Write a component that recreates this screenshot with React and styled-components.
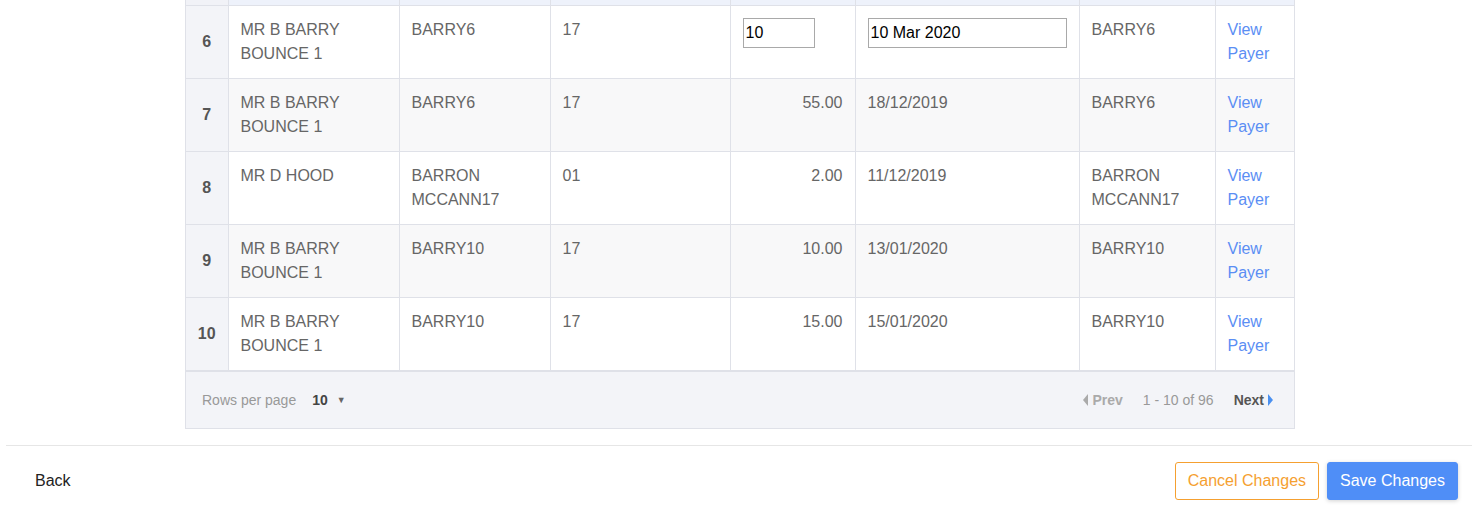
import React from 'react'
import styled, { createGlobalStyle } from 'styled-components'

const GlobalStyle = createGlobalStyle`
body {
  margin: 0;
  background: #fff;
  font-family: "Liberation Sans", Arial, sans-serif;
}
`

const Page = styled.div`
width: 1473px;
height: 525px;
overflow: hidden;
`

const TableWrap = styled.div`
box-sizing: border-box;
margin-left: 185px;
width: 1110px;
border: 1px solid #dfe1e8;
border-top: none;
`

const Table = styled.table`
width: 100%;
border-collapse: collapse;
table-layout: fixed;
font-size: 16px;
line-height: 24px;
color: #666;
`

const HeadTail = styled.tr`
height: 5px;
td {
  padding: 0;
  background: #eef2fb;
  border-left: 1px solid #dfe1e8;
  border-bottom: 1px solid #dfe1e8;
}
td:first-child {
  background: #f1f2f7;
  border-left: none;
}
`

const Row = styled.tr`
background: ${p => (p.striped ? '#f8f8f9' : '#fff')};
`

const Cell = styled.td`
height: 48px;
padding: 12px 12px;
vertical-align: top;
text-align: ${p => (p.right ? 'right' : 'left')};
border-left: 1px solid #dfe1e8;
border-bottom: 1px solid #dfe1e8;
`

const NumCell = styled.td`
padding: 0;
text-align: center;
vertical-align: middle;
font-weight: bold;
color: #555;
background: #f3f4f8;
border-bottom: 1px solid #dfe1e8;
`

const LinkText = styled.a`
color: #5b8ef4;
text-decoration: none;
cursor: pointer;
`

const Input = styled.input`
box-sizing: border-box;
display: block;
width: ${p => p.w}px;
height: 30px;
margin: 0;
padding: 1px 2px;
border: 1px solid #a9a9a9;
font-family: "Liberation Sans", Arial, sans-serif;
font-size: 16px;
color: #000;
background: #fff;
`

const Pager = styled.div`
display: flex;
align-items: center;
justify-content: space-between;
height: 56px;
padding: 0 21px 0 16px;
background: #f3f4f8;
border-top: 1px solid #dfe1e8;
font-size: 14px;
color: #999;
`

const PagerSide = styled.div`
display: flex;
align-items: center;
gap: ${p => p.gap}px;
`

const RowsSelect = styled.span`
display: inline-flex;
align-items: center;
gap: 9px;
font-weight: bold;
color: #444;
`

const Caret = styled.span`
font-size: 9px;
color: #666;
`

const PageBtn = styled.span`
display: inline-flex;
align-items: center;
gap: 4px;
font-weight: bold;
color: ${p => (p.active ? '#555' : '#aaa')};
`

const Tri = styled.span`
width: 0;
height: 0;
border-top: 6px solid transparent;
border-bottom: 6px solid transparent;
${p => (p.left ? 'border-right: 5px solid #aaa;' : 'border-left: 5px solid #4a90f0;')}
`

const Divider = styled.div`
margin: 16px 0 0 6px;
width: 1466px;
border-top: 1px solid #e6e6e6;
`

const Footer = styled.div`
display: flex;
align-items: center;
justify-content: space-between;
padding: 16px 15px 0 35px;
`

const BackLink = styled.a`
font-size: 16px;
color: #222;
cursor: pointer;
`

const Actions = styled.div`
display: flex;
gap: 8px;
`

const Button = styled.button`
box-sizing: border-box;
height: 38px;
padding: 0 12px;
border-radius: 3px;
font-family: "Liberation Sans", Arial, sans-serif;
font-size: 16px;
cursor: pointer;
${p => p.primary
    ? 'background: #4f8ef7; color: #fff; border: 1px solid #4f8ef7; box-shadow: 0 1px 4px rgba(0,0,0,0.18);'
    : 'background: #fff; color: #f5a030; border: 1px solid #f5a030;'}
`

const rows = [
  { n: 6, name: 'MR B BARRY BOUNCE 1', ref: 'BARRY6', code: '17', edit: true, ref2: 'BARRY6' },
  { n: 7, name: 'MR B BARRY BOUNCE 1', ref: 'BARRY6', code: '17', amount: '55.00', date: '18/12/2019', ref2: 'BARRY6' },
  { n: 8, name: 'MR D HOOD', ref: 'BARRON MCCANN17', code: '01', amount: '2.00', date: '11/12/2019', ref2: 'BARRON MCCANN17' },
  { n: 9, name: 'MR B BARRY BOUNCE 1', ref: 'BARRY10', code: '17', amount: '10.00', date: '13/01/2020', ref2: 'BARRY10' },
  { n: 10, name: 'MR B BARRY BOUNCE 1', ref: 'BARRY10', code: '17', amount: '15.00', date: '15/01/2020', ref2: 'BARRY10' }
]

// column widths, summing to the 1108px inside the wrapper border
const widths = [42, 171, 151, 180, 125, 224, 136, 79]

function App() {
  return (
    <Page>
      <GlobalStyle />
      <TableWrap>
        <Table>
          <colgroup>
            {widths.map((w, i) => <col key={i} style={{ width: w }} />)}
          </colgroup>
          <tbody>
            <HeadTail>
              {widths.map((w, i) => <td key={i}></td>)}
            </HeadTail>
            {rows.map((r, i) => (
              <Row key={r.n} striped={i % 2 === 1}>
                <NumCell>{r.n}</NumCell>
                <Cell>{r.name}</Cell>
                <Cell>{r.ref}</Cell>
                <Cell>{r.code}</Cell>
                {r.edit ? (
                  <>
                    <Cell><Input w={72} defaultValue="10" /></Cell>
                    <Cell><Input w={199} defaultValue="10 Mar 2020" /></Cell>
                  </>
                ) : (
                  <>
                    <Cell right>{r.amount}</Cell>
                    <Cell>{r.date}</Cell>
                  </>
                )}
                <Cell>{r.ref2}</Cell>
                <Cell><LinkText>View Payer</LinkText></Cell>
              </Row>
            ))}
          </tbody>
        </Table>
        <Pager>
          <PagerSide gap={16}>
            Rows per page
            <RowsSelect>10 <Caret>▼</Caret></RowsSelect>
          </PagerSide>
          <PagerSide gap={20}>
            <PageBtn><Tri left />Prev</PageBtn>
            <span>1 - 10 of 96</span>
            <PageBtn active>Next<Tri /></PageBtn>
          </PagerSide>
        </Pager>
      </TableWrap>
      <Divider />
      <Footer>
        <BackLink>Back</BackLink>
        <Actions>
          <Button>Cancel Changes</Button>
          <Button primary>Save Changes</Button>
        </Actions>
      </Footer>
    </Page>
  )
}

export default App
